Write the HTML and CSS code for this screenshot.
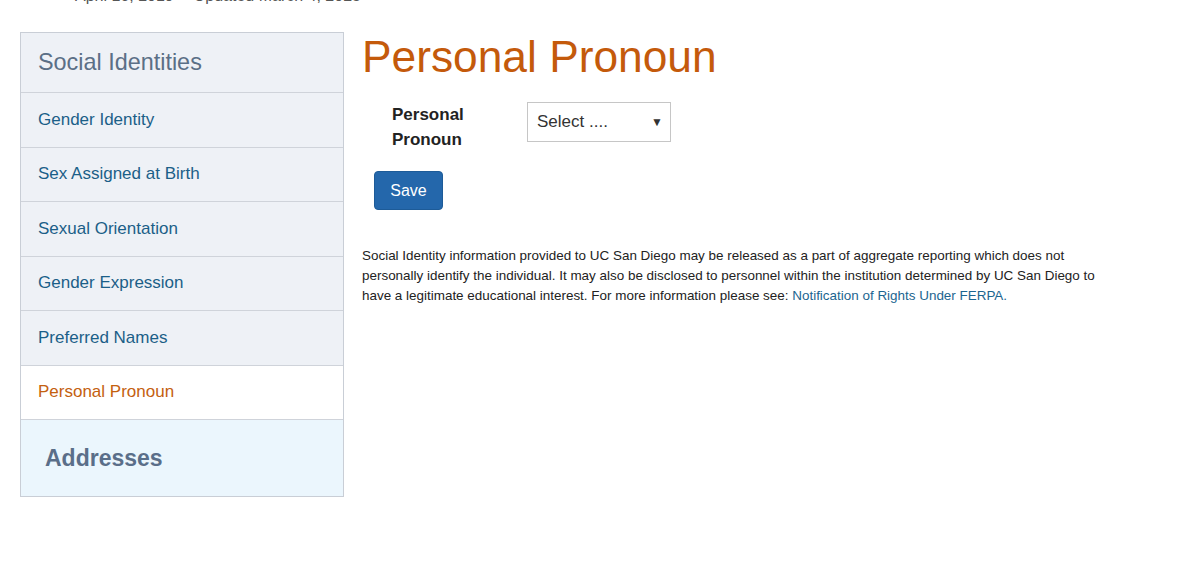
FILE: index.html
```html
<!DOCTYPE html>
<html lang="en">
<head>
<meta charset="utf-8">
<title>Personal Pronoun</title>
<link rel="stylesheet" href="styles.css">
</head>
<body>
  <div class="dates">
    <span>April 16, 2019</span>
    <span>Updated March 4, 2025</span>
  </div>
  <div class="layout">
    <nav class="sidebar">
      <div class="side-head">Social Identities</div>
      <a class="side-item" href="#">Gender Identity</a>
      <a class="side-item" href="#">Sex Assigned at Birth</a>
      <a class="side-item" href="#">Sexual Orientation</a>
      <a class="side-item" href="#">Gender Expression</a>
      <a class="side-item" href="#">Preferred Names</a>
      <a class="side-item active" href="#">Personal Pronoun</a>
      <div class="side-section">Addresses</div>
    </nav>
    <main class="content">
      <h1 class="title">Personal Pronoun</h1>
      <div class="form-row">
        <label class="form-label">Personal<br>Pronoun</label>
        <div class="select">
          <span>Select ....</span>
          <span class="arrow">&#9660;</span>
        </div>
      </div>
      <button class="save">Save</button>
      <p class="notice">Social Identity information provided to UC San Diego may be released as a part of aggregate reporting which does not personally identify the individual. It may also be disclosed to personnel within the institution determined by UC San Diego to have a legitimate educational interest. For more information please see: <a href="#" class="notice-link">Notification of Rights Under FERPA.</a></p>
    </main>
  </div>
</body>
</html>
```
FILE: styles.css
```css
* { box-sizing: border-box; }
html, body { margin: 0; padding: 0; background: #fff; }
body {
  font-family: "Liberation Sans", Arial, sans-serif;
  color: #222;
  overflow: hidden;
}
.dates {
  margin-top: -14px;
  height: 20px;
  line-height: 20px;
  font-size: 16px;
  color: #555;
  padding-left: 75px;
  display: flex;
  gap: 20px;
}
.layout {
  display: flex;
  align-items: flex-start;
  margin-top: 26px;
  padding-left: 20px;
  gap: 18px;
}
.sidebar {
  width: 324px;
  flex: none;
  border: 1px solid #c9ced6;
  background: #eef1f6;
  display: flex;
  flex-direction: column;
}
.side-head {
  height: 60px;
  display: flex;
  align-items: center;
  padding-left: 17px;
  font-size: 23.4px;
  color: #5b6f86;
  border-bottom: 1px solid #cfd3da;
}
.side-item {
  height: 54.5px;
  display: flex;
  align-items: center;
  padding-left: 17px;
  font-size: 17px;
  color: #1b5f88;
  text-decoration: none;
  border-bottom: 1px solid #cfd3da;
}
.side-item.active {
  background: #fff;
  color: #c4600f;
}
.side-section {
  height: 76px;
  display: flex;
  align-items: center;
  padding-left: 24px;
  font-size: 23px;
  font-weight: bold;
  color: #5a6e89;
  background: #ebf6fd;
}
.content {
  flex: 1;
  padding-top: 1px;
}
.title {
  margin: 0;
  font-size: 44.3px;
  line-height: 48px;
  font-weight: normal;
  color: #c45a0b;
}
.form-row {
  display: flex;
  align-items: flex-start;
  margin-top: 21px;
  padding-left: 30px;
}
.form-label {
  width: 135px;
  font-size: 17px;
  font-weight: bold;
  line-height: 25px;
  color: #222;
}
.select {
  width: 144px;
  height: 40px;
  border: 1px solid #c6c6c6;
  background: #fff;
  display: flex;
  align-items: center;
  justify-content: space-between;
  padding: 0 7px 0 9px;
  font-size: 17px;
  color: #333;
}
.arrow {
  font-size: 12px;
  color: #333;
}
.save {
  display: block;
  margin: 19px 0 0 12px;
  width: 69px;
  height: 39px;
  padding: 0;
  border: 1px solid #1d5b98;
  border-radius: 4px;
  background: #2467ab;
  color: #fff;
  font-family: "Liberation Sans", Arial, sans-serif;
  font-size: 16px;
}
.notice {
  margin: 36px 0 0 0;
  width: 760px;
  font-size: 13.45px;
  line-height: 20px;
  color: #222;
}
.notice-link {
  color: #1b6590;
  text-decoration: none;
}
```
